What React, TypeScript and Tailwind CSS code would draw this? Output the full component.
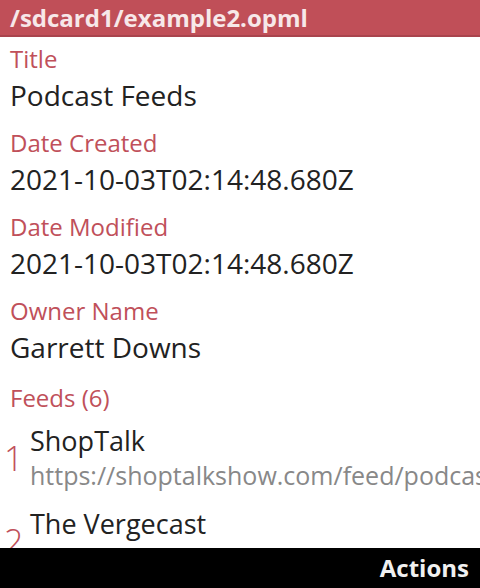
import React from "react";

const red = "text-[#c0505a]";

function Field({ label, value }: { label: string; value: string }) {
  return (
    <div className="flex flex-col px-[10px] pb-[12px]">
      <div className={`text-[24px] leading-[32px] ${red}`}>{label}</div>
      <div className="text-[28px] leading-[40px] text-[#222] whitespace-nowrap">{value}</div>
    </div>
  );
}

export default function App() {
  const feeds = [
    { n: "1", title: "ShopTalk", url: "https://shoptalkshow.com/feed/podcast" },
    { n: "2", title: "The Vergecast", url: "https://feeds.megaphone.fm/vergecast" },
  ];
  return (
    <div
      className="w-[480px] h-[588px] flex flex-col bg-white overflow-hidden"
      style={{ fontFamily: '"Open Sans", sans-serif' }}
    >
      <div className="h-[37px] shrink-0 bg-[#c04f58] border-b-2 border-[#a9444d] px-[10px] flex items-center">
        <span className="text-[24px] font-bold text-[#f7e8e9] leading-none">/sdcard1/example2.opml</span>
      </div>
      <div className="flex-1 overflow-hidden pt-[6px]">
        <Field label="Title" value="Podcast Feeds" />
        <Field label="Date Created" value="2021-10-03T02:14:48.680Z" />
        <Field label="Date Modified" value="2021-10-03T02:14:48.680Z" />
        <Field label="Owner Name" value="Garrett Downs" />
        <div className="mt-[3px]">
          <div className={`px-[10px] text-[24px] leading-[32px] ${red}`}>Feeds (6)</div>
          <div className="flex flex-col gap-[15px] pt-[10px] pl-[4px]">
            {feeds.map((f) => (
              <div key={f.n} className="flex items-center">
                <div className={`w-[26px] shrink-0 text-[34px] leading-[40px] font-light ${red}`}>{f.n}</div>
                <div className="flex flex-col min-w-0">
                  <div className="text-[27px] leading-[34px] text-[#222] whitespace-nowrap">{f.title}</div>
                  <div className="text-[25px] leading-[34px] text-[#888] whitespace-nowrap">{f.url}</div>
                </div>
              </div>
            ))}
          </div>
        </div>
      </div>
      <div className="h-[40px] shrink-0 bg-black flex items-center justify-end px-[11px]">
        <span className="text-[24px] font-bold text-[#f0f0f0] leading-none">Actions</span>
      </div>
    </div>
  );
}
